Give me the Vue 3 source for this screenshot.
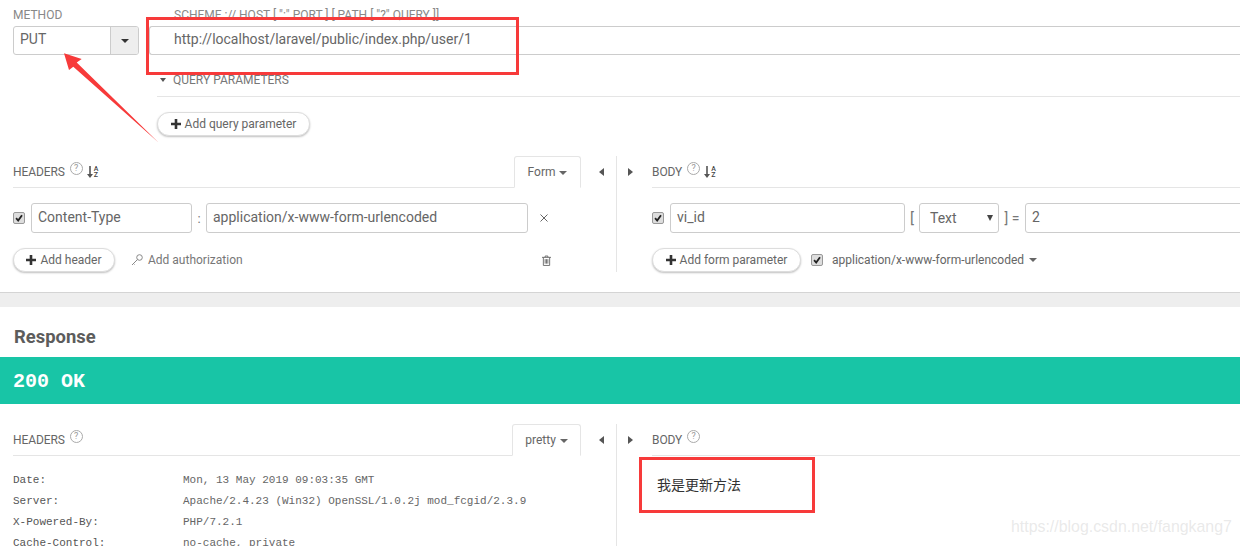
<script setup>
const headers = [
  ['Date:', 'Mon, 13 May 2019 09:03:35 GMT'],
  ['Server:', 'Apache/2.4.23 (Win32) OpenSSL/1.0.2j mod_fcgid/2.3.9'],
  ['X-Powered-By:', 'PHP/7.2.1'],
  ['Cache-Control:', 'no-cache, private'],
]
</script>

<template>
  <div class="page">
    <section class="request">
      <div class="url-row">
        <div class="method">
          <div class="label">METHOD</div>
          <div class="method-select">
            <span class="method-value">PUT</span>
            <span class="method-btn"><i class="caret dark"></i></span>
          </div>
        </div>
        <div class="url-col">
          <div class="label url-label">SCHEME :// HOST [ ":" PORT ] [ PATH [ "?" QUERY ]]</div>
          <div class="field url-field">http://localhost/laravel/public/index.php/user/1</div>
          <div class="query">
            <div class="query-head"><i class="caret dark small"></i><span>QUERY PARAMETERS</span></div>
            <button class="pill query-btn">
              <svg class="plus" viewBox="0 0 10 10"><path d="M3.7 0h2.6v3.7H10v2.6H6.3V10H3.7V6.3H0V3.7h3.7z" /></svg>Add query parameter
            </button>
          </div>
        </div>
      </div>

      <div class="panels req-panels">
        <div class="panel-left">
          <div class="panel-main">
            <div class="head">
              <span class="head-title">HEADERS</span>
              <span class="help">?</span>
              <span class="sort"><svg viewBox="0 0 6 12"><path d="M2.200 0h1.600v8H6L3 12 0 8h2.200z" /></svg><span class="az">A<br />Z</span></span>
              <span class="tab">Form <i class="caret"></i></span>
            </div>
            <div class="row">
              <span class="check"><svg viewBox="0 0 12 12"><path d="M2.500 6.200 5 9l4.600-6.400" /></svg></span>
              <div class="field name-field">Content-Type</div>
              <span class="sep colon">:</span>
              <div class="field value-field">application/x-www-form-urlencoded</div>
              <svg class="close" viewBox="0 0 8 8"><path d="M.5.5l7 7M7.500.5l-7 7" /></svg>
            </div>
            <div class="foot">
              <button class="pill header-btn">
                <svg class="plus" viewBox="0 0 10 10"><path d="M3.700 0h2.600v3.700H10v2.600H6.300V10H3.700V6.300H0V3.700h3.700z" /></svg>Add header
              </button>
              <svg class="key" viewBox="0 0 12 12"><circle cx="8.500" cy="3.500" r="2.800" /><path d="M6.500 5.500 1 11M2 9l1.500 1.500" /></svg>
              <span class="auth">Add authorization</span>
              <svg class="trash" viewBox="0 0 10 12"><path d="M0 2.500h10M3.500 2.500V1h3v1.500M1.500 2.500V11.500h7V2.500M3.500 4.500v5M5 4.500v5M6.500 4.500v5" /></svg>
            </div>
          </div>
          <div class="collapse-left"><i class="tri-left"></i></div>
        </div>
        <div class="panel-right">
          <div class="collapse-right"><i class="tri-right"></i></div>
          <div class="panel-main right-main">
            <div class="head">
              <span class="head-title">BODY</span>
              <span class="help">?</span>
              <span class="sort"><svg viewBox="0 0 6 12"><path d="M2.200 0h1.600v8H6L3 12 0 8h2.200z" /></svg><span class="az">A<br />Z</span></span>
            </div>
            <div class="row">
              <span class="check"><svg viewBox="0 0 12 12"><path d="M2.500 6.200 5 9l4.600-6.400" /></svg></span>
              <div class="field param-field">vi_id</div>
              <span class="sep bracket-open">[</span>
              <div class="field type-field"><span>Text</span><i class="type-caret"></i></div>
              <span class="sep bracket-close">] =</span>
              <div class="field param-value">2</div>
            </div>
            <div class="foot">
              <button class="pill form-btn">
                <svg class="plus" viewBox="0 0 10 10"><path d="M3.700 0h2.600v3.700H10v2.600H6.300V10H3.700V6.300H0V3.700h3.700z" /></svg>Add form parameter
              </button>
              <span class="check foot-check"><svg viewBox="0 0 12 12"><path d="M2.500 6.200 5 9l4.600-6.400" /></svg></span>
              <span class="content-type">application/x-www-form-urlencoded <i class="caret"></i></span>
            </div>
          </div>
        </div>
      </div>
    </section>

    <div class="gap"></div>

    <section class="response">
      <h2 class="response-title">Response</h2>
      <div class="status">200 OK</div>
      <div class="panels res-panels">
        <div class="panel-left">
          <div class="panel-main">
            <div class="head res-head">
              <span class="head-title">HEADERS</span>
              <span class="help">?</span>
              <span class="tab pretty">pretty <i class="caret"></i></span>
            </div>
            <dl class="res-list">
              <div v-for="h in headers" :key="h[0]" class="res-line">
                <dt>{{ h[0] }}</dt>
                <dd>{{ h[1] }}</dd>
              </div>
            </dl>
          </div>
          <div class="collapse-left"><i class="tri-left"></i></div>
        </div>
        <div class="panel-right">
          <div class="collapse-right"><i class="tri-right"></i></div>
          <div class="panel-main right-main">
            <div class="head res-head">
              <span class="head-title">BODY</span>
              <span class="help">?</span>
            </div>
            <div class="res-body">我是更新方法</div>
          </div>
        </div>
      </div>
    </section>

    <div class="red-box box-url"></div>
    <div class="red-box box-body"></div>
    <svg class="red-arrow" viewBox="0 0 170 150"><path d="M64 53.300 81.700 59 76.700 62.500 158.500 142.500 73.300 66.700 69 70z" /></svg>
    <div class="watermark">https://blog.csdn.net/fangkang7</div>
  </div>
</template>

<style>
html, body { margin: 0; background: #fff; }
</style>

<style scoped>
.page {
  position: relative;
  width: 1240px;
  height: 546px;
  overflow: hidden;
  background: #fff;
  font-family: Roboto, "Noto Sans CJK SC", sans-serif;
  color: #666;
}
.request {
  height: 292px;
  box-sizing: content-box;
  border-bottom: 1px solid #d4d4d4;
  box-shadow: 0 1px 2px rgba(0, 0, 0, .15);
}
.url-row { display: flex; padding-left: 13px; height: 156px; box-sizing: border-box; padding-top: 8px; }
.method { width: 136px; flex: none; }
.label { height: 18px; line-height: 14px; font-size: 12px; color: #888; }
.method-select {
  display: flex;
  width: 126px;
  height: 29px;
  box-sizing: border-box;
  border: 1px solid #ccc;
  border-radius: 3px;
  overflow: hidden;
}
.method-value { flex: 1; padding-left: 6px; font-size: 14px; line-height: 25px; color: #666; }
.method-btn {
  width: 27px;
  background: #eee;
  border-left: 1px solid #ccc;
  display: flex;
  align-items: center;
  justify-content: center;
}
.url-col { flex: none; width: 1100px; }
.url-label { padding-left: 25px; }
.field {
  box-sizing: border-box;
  height: 30px;
  border: 1px solid #ccc;
  border-radius: 3px;
  font-size: 14px;
  line-height: 26px;
  color: #666;
  padding-left: 6px;
  flex: none;
}
.url-field { height: 29px; line-height: 25px; padding-left: 24px; border-right: 0; border-radius: 3px 0 0 3px; }
.query { margin-left: 8px; }
.query-head {
  display: flex;
  align-items: center;
  height: 42px;
  box-sizing: border-box;
  padding: 9px 0 0 3px;
  border-bottom: 1px solid #e5e5e5;
  font-size: 12px;
  color: #777;
}
.query-head span { margin-left: 7px; }
.query-head .caret { margin-left: 0; }
.pill {
  display: flex;
  align-items: center;
  box-sizing: border-box;
  height: 24px;
  padding: 0;
  justify-content: center;
  border: 1px solid #ddd;
  border-radius: 12px;
  background: #fff;
  box-shadow: 0 1px 2px rgba(0, 0, 0, .25);
  font-family: inherit;
  font-size: 12px;
  color: #666;
}
.query-btn { width: 153px; margin-top: 15px; }
.header-btn { width: 102px; }
.form-btn { width: 149px; }
.plus { width: 10px; height: 10px; margin-right: 4px; fill: #333; }
.caret {
  display: inline-block;
  width: 0;
  height: 0;
  border-left: 4px solid transparent;
  border-right: 4px solid transparent;
  border-top: 4px solid #666;
  vertical-align: middle;
  margin-left: 1px;
}
.caret.dark { border-top-color: #333; }
.caret.small { border-left-width: 3.500px; border-right-width: 3.500px; border-top-color: #555; }

.panels { display: flex; }
.req-panels { height: 116px; }
.panel-left { width: 617px; flex: none; display: flex; padding-left: 13px; box-sizing: border-box; border-right: 1px solid #e5e5e5; }
.panel-left .panel-main { width: 568px; flex: none; }
.collapse-left, .collapse-right { height: 31px; display: flex; align-items: center; }
.collapse-left { width: 35px; justify-content: flex-end; padding-right: 12px; box-sizing: border-box; }
.collapse-right { width: 35px; flex: none; padding-left: 11px; box-sizing: border-box; }
.tri-left, .tri-right { width: 0; height: 0; border-top: 4px solid transparent; border-bottom: 4px solid transparent; }
.tri-left { border-right: 5px solid #555; }
.tri-right { border-left: 5px solid #555; }
.panel-right { flex: 1; display: flex; min-width: 0; }
.right-main { flex: 1; min-width: 0; }
.head {
  position: relative;
  display: flex;
  align-items: center;
  box-sizing: border-box;
  height: 32px;
  border-bottom: 1px solid #e5e5e5;
  font-size: 12px;
  color: #666;
}
.head-title { letter-spacing: -.1px; }
.help {
  box-sizing: border-box;
  width: 13px;
  height: 13px;
  margin: -6px 0 0 5px;
  border: 1px solid #aaa;
  border-radius: 50%;
  font-size: 9px;
  line-height: 11px;
  text-align: center;
  color: #999;
}
.sort { display: flex; align-items: center; margin-left: 4px; margin-top: 1px; }
.sort svg { width: 6px; height: 12px; fill: #555; }
.az { font-size: 7px; line-height: 6.500px; margin-left: 1px; color: #444; font-weight: 500; }
.tab {
  position: absolute;
  right: 0;
  top: 0;
  box-sizing: border-box;
  width: 67px;
  height: 32px;
  line-height: 30px;
  text-align: center;
  border: 1px solid #e5e5e5;
  border-bottom-color: #fff;
  border-radius: 3px 3px 0 0;
  background: #fff;
}
.tab.pretty { width: 69px; }
.row { display: flex; align-items: center; margin-top: 15px; height: 30px; }
.check {
  flex: none;
  box-sizing: border-box;
  width: 12px;
  height: 12px;
  border: 1px solid #999;
  border-radius: 2px;
  background: #ddd;
  display: flex;
}
.check svg { width: 10px; height: 10px; fill: none; stroke: #222; stroke-width: 2.200; }
.name-field { width: 161px; margin-left: 6px; }
.sep { color: #777; font-size: 13px; flex: none; }
.colon { width: 14px; text-align: center; }
.value-field { width: 322px; }
.close { width: 8px; height: 8px; margin-left: 12px; fill: none; stroke: #666; stroke-width: 1; }
.foot { display: flex; align-items: center; height: 24px; margin-top: 15px; font-size: 12px; color: #777; }
.key { width: 12px; height: 12px; margin-left: 16px; fill: none; stroke: #888; stroke-width: 1; }
.auth { margin-left: 5px; }
.trash { width: 9px; height: 11px; margin-left: 299px; fill: none; stroke: #666; stroke-width: 1; }
.param-field { width: 235px; margin-left: 6px; }
.bracket-open { width: 14px; text-align: center; font-size: 15px; }
.type-field {
  display: flex;
  align-items: center;
  justify-content: space-between;
  width: 80px;
  padding: 0 5px 0 10px;
}
.type-caret { width: 0; height: 0; border-left: 3.500px solid transparent; border-right: 3.500px solid transparent; border-top: 6px solid #444; }
.bracket-close { width: 26px; text-align: center; font-size: 14px; }
.param-value { width: 300px; }
.foot-check { margin-left: 10px; }
.content-type { margin-left: 9px; font-size: 12px; color: #666; margin-top: -1px; }
.content-type .caret { margin-left: 2px; }

.gap { height: 14px; background: #eee; }
.response { height: 239px; }
.response-title { margin: 0; height: 50px; line-height: 60px; padding-left: 14px; font-size: 18.400px; font-weight: 700; color: #5c5c5c; }
.status {
  height: 47px;
  box-sizing: border-box;
  padding-left: 13px;
  background: #18c5a6;
  color: #fff;
  font-family: "Liberation Mono", monospace;
  font-size: 20px;
  font-weight: 700;
  line-height: 50px;
}
.res-panels { margin-top: 20px; height: 122px; }
.res-head { height: 32px; }
.res-list { margin: 14px 0 0; font-family: "Liberation Mono", monospace; font-size: 11px; color: #555; }
.res-line { display: flex; height: 21px; line-height: 21px; }
.res-line dt { width: 170px; flex: none; color: #555; }
.res-line dd { margin: 0; color: #666; }
.res-body { margin: 18px 0 0 5px; font-family: "Noto Sans CJK SC", sans-serif; font-size: 14px; line-height: 20px; color: #333; }

.red-box { position: absolute; box-sizing: border-box; border: 3px solid #f73a3a; }
.box-url { left: 146px; top: 17px; width: 373px; height: 58px; }
.box-body { left: 639px; top: 457px; width: 176px; height: 56px; }
.red-arrow { position: absolute; left: 0; top: 0; width: 170px; height: 150px; fill: #f73a3a; }
.watermark {
  position: absolute;
  left: 1011px;
  top: 518px;
  font-family: "Liberation Sans", sans-serif;
  font-size: 15.900px;
  color: rgba(200, 200, 200, .4);
  white-space: nowrap;
}
</style>
